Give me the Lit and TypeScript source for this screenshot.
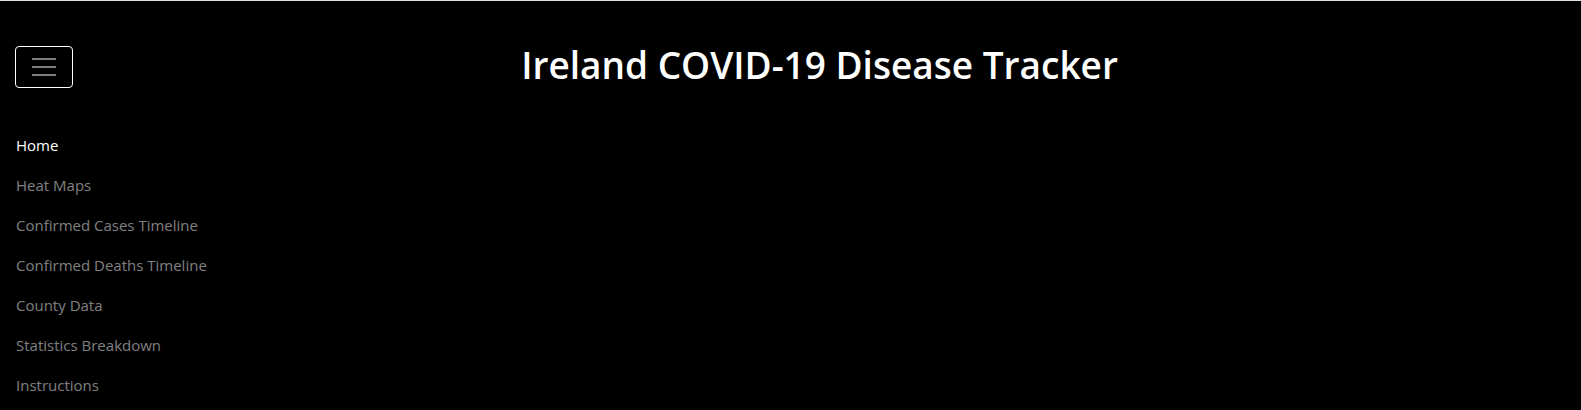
import { LitElement, html, css } from "lit";
import { customElement, state } from "lit/decorators.js";

const PAGES = [
  "Home",
  "Heat Maps",
  "Confirmed Cases Timeline",
  "Confirmed Deaths Timeline",
  "County Data",
  "Statistics Breakdown",
  "Instructions",
];

@customElement("app-root")
class AppRoot extends LitElement {
  @state() private open = true;

  static styles = css`
    :host {
      display: block;
      background: #000;
      border-top: 1px solid #dee2e6;
      font-family: "Open Sans", "Noto Sans", sans-serif;
      font-size: 15px;
      line-height: 24px;
      color: #fff;
    }
    .bar {
      display: flex;
      align-items: flex-end;
      padding: 41px 15px 37px;
    }
    .toggle {
      display: block;
      padding: 5px 12px;
      background: transparent;
      border: 1px solid #fff;
      border-radius: 4px;
      cursor: pointer;
    }
    .toggle svg {
      display: block;
      width: 32px;
      height: 30px;
    }
    .title {
      flex: 1;
      margin: 0;
      text-align: center;
      font-size: 37px;
      line-height: 46px;
      font-weight: 600;
    }
    .menu {
      list-style: none;
      margin: 0;
      padding: 0 16px 5px;
    }
    .link {
      display: block;
      padding: 8px 0;
      color: rgba(255, 255, 255, 0.5);
      text-decoration: none;
    }
    .active {
      color: #fff;
    }
  `;

  render() {
    return html`
      <header class="bar">
        <button class="toggle" aria-label="Toggle navigation" aria-expanded=${this.open}
          @click=${() => (this.open = !this.open)}>
          <svg viewBox="0 0 30 30" fill="none" stroke="#fff" stroke-opacity="0.5"
            stroke-width="2" stroke-miterlimit="10">
            <path d="M3 7h24M3 15h24M3 23h24" />
          </svg>
        </button>
        <h1 class="title">Ireland COVID-19 Disease Tracker</h1>
      </header>
      ${this.open
        ? html`<nav><ul class="menu">
            ${PAGES.map((p, i) => html`<li><a class="link ${i === 0 ? "active" : ""}" href="#">${p}</a></li>`)}
          </ul></nav>`
        : ""}
    `;
  }
}
